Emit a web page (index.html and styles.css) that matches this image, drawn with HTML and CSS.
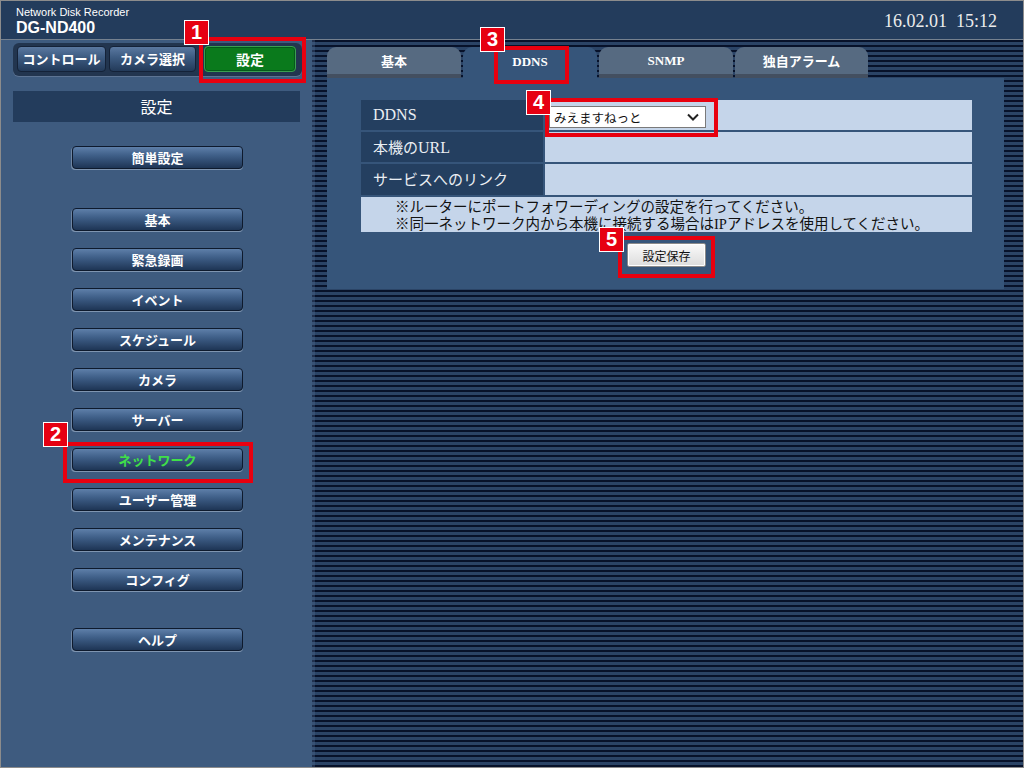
FILE: index.html
```html
<!DOCTYPE html>
<html lang="ja">
<head>
<meta charset="utf-8">
<title>DG-ND400 設定</title>
<link rel="stylesheet" href="styles.css">
</head>
<body>
<div class="app">
  <header class="topbar">
    <div class="brand">
      <div class="brand-sub">Network Disk Recorder</div>
      <div class="brand-model">DG-ND400</div>
    </div>
    <div class="clock">16.02.01&nbsp;&nbsp;15:12</div>
  </header>
  <div class="main">
    <aside class="sidebar">
      <div class="modes">
        <div class="mode">コントロール</div>
        <div class="mode">カメラ選択</div>
        <div class="mode mode-active">設定</div>
      </div>
      <div class="side-title">設定</div>
      <nav class="menu">
        <div class="menu-btn">簡単設定</div>
        <div class="menu-btn menu-sep">基本</div>
        <div class="menu-btn">緊急録画</div>
        <div class="menu-btn">イベント</div>
        <div class="menu-btn">スケジュール</div>
        <div class="menu-btn">カメラ</div>
        <div class="menu-btn">サーバー</div>
        <div class="menu-btn menu-current">ネットワーク</div>
        <div class="menu-btn">ユーザー管理</div>
        <div class="menu-btn">メンテナンス</div>
        <div class="menu-btn">コンフィグ</div>
        <div class="menu-btn menu-sep2">ヘルプ</div>
      </nav>
    </aside>
    <section class="content">
      <div class="tabs">
        <div class="tab">基本</div>
        <div class="tab tab-active latin">DDNS</div>
        <div class="tab latin">SNMP</div>
        <div class="tab">独自アラーム</div>
      </div>
      <div class="panel">
        <div class="form">
          <div class="label serif">DDNS</div>
          <div class="value">
            <div class="select">
              <span>みえますねっと</span>
              <svg class="chev" width="12" height="8" viewBox="0 0 12 8"><path d="M1 1.5 L6 6.5 L11 1.5" fill="none" stroke="#222" stroke-width="2"/></svg>
            </div>
          </div>
          <div class="label">本機の<span class="serif">URL</span></div>
          <div class="value"></div>
          <div class="label">サービスへのリンク</div>
          <div class="value"></div>
          <div class="notes">
            <div>※ルーターにポートフォワーディングの設定を行ってください。</div>
            <div>※同一ネットワーク内から本機に接続する場合は<span class="ip">IP</span>アドレスを使用してください。</div>
          </div>
        </div>
        <div class="actions">
          <button class="save" type="button">設定保存</button>
        </div>
      </div>
    </section>
  </div>

  <div class="hl hl-1"></div>
  <div class="tag tag-1">1</div>
  <div class="hl hl-2"></div>
  <div class="tag tag-2">2</div>
  <div class="hl hl-3"></div>
  <div class="tag tag-3">3</div>
  <div class="hl hl-4"></div>
  <div class="tag tag-4">4</div>
  <div class="hl hl-5"></div>
  <div class="tag tag-5">5</div>
</div>
</body>
</html>
```

FILE: styles.css
```css
* { box-sizing: border-box; }
html, body { margin: 0; padding: 0; }
body {
  width: 1024px;
  height: 768px;
  overflow: hidden;
  background: #ffffff;
  font-family: "Noto Sans CJK JP", "Liberation Sans", sans-serif;
}
.app {
  position: relative;
  width: 1024px;
  height: 768px;
  border: 1px solid #8c8c8c;
  display: flex;
  flex-direction: column;
  background: #3e5b7f;
  overflow: hidden;
}

/* ---------- top bar ---------- */
.topbar {
  height: 39px;
  flex: none;
  background: #233c5c;
  border-bottom: 1px solid #75818f;
  display: flex;
  justify-content: space-between;
  align-items: flex-start;
  color: #ffffff;
}
.brand { padding: 5px 0 0 15px; font-family: "Liberation Sans", Arial, sans-serif; }
.brand-sub { font-size: 11px; line-height: 12px; }
.brand-model { font-size: 16px; font-weight: bold; line-height: 17px; margin-top: 1px; }
.clock {
  font-family: "Liberation Serif", "Times New Roman", serif;
  font-size: 18px;
  color: #ececec;
  padding: 10px 26px 0 0;
  line-height: 20px;
}

/* ---------- layout ---------- */
.main { flex: 1; display: flex; min-height: 0; }
.sidebar {
  width: 311px;
  flex: none;
  background: #3e5b7f;
  padding: 3px 0 0 12px;
  display: flex;
  flex-direction: column;
}
.content {
  flex: 1;
  padding: 7px 0 0 15px;
  background: repeating-linear-gradient(to bottom, #07122a 0, #07122a 2px, #2b4466 2px, #2b4466 5px);
  box-shadow: inset 3px 0 0 rgba(80, 110, 150, 0.35);
}

/* ---------- mode buttons ---------- */
.modes {
  width: 289px;
  height: 33px;
  display: flex;
  gap: 3px;
  padding: 3px 5px 3px 4px;
  background: #22354f;
  border-radius: 6px;
  box-shadow: 0 1px 0 #5d7493;
}
.mode {
  height: 26px;
  flex: none;
  width: 89px;
  border-radius: 4px;
  background: linear-gradient(to bottom, #5a78a0 0%, #3c5a80 45%, #233a59 100%);
  border: 1px solid #142238;
  color: #ffffff;
  font-size: 13px;
  font-weight: bold;
  line-height: 24px;
  text-align: center;
}
.mode:nth-child(2) { width: 87px; }
.mode-active {
  margin-left: 5px;
  width: 92px;
  background: #0a7a1c;
  border: 1px solid #3aa050;
  box-shadow: inset 0 0 0 1px #06591a;
  font-size: 14px;
}

.side-title {
  margin-top: 15px;
  width: 287px;
  height: 31px;
  background: #233c5c;
  color: #ffffff;
  font-size: 16px;
  line-height: 31px;
  text-align: center;
}

/* ---------- side menu ---------- */
.menu {
  margin: 24px 0 0 59px;
  display: flex;
  flex-direction: column;
  gap: 17px;
}
.menu-btn {
  width: 171px;
  height: 23px;
  border: 1px solid #0e1a2d;
  border-radius: 4px;
  background: linear-gradient(to bottom, #5e7fa9 0%, #3f5f88 40%, #1e3555 100%);
  box-shadow: 0 1px 0 #7f95b0, -1px 1px 0 #6f86a4;
  color: #ffffff;
  font-size: 13px;
  font-weight: bold;
  line-height: 21px;
  text-align: center;
}
.menu-sep { margin-top: 22px; }
.menu-sep2 { margin-top: 20px; }
.menu-current { color: #3fe048; }

/* ---------- tabs ---------- */
.tabs { display: flex; gap: 2px; height: 31px; }
.tab {
  width: 134px;
  height: 31px;
  background: #566a81;
  border-bottom: 4px solid #434f60;
  border-radius: 9px 9px 0 0;
  color: #ffffff;
  font-size: 13px;
  font-weight: bold;
  line-height: 27px;
  text-align: center;
}
.tab:nth-child(4) { width: 133px; }
.latin { font-family: "Liberation Serif", "Noto Sans CJK JP", serif; font-size: 13px; }
.tab-active {
  background: #36557a;
  border-bottom: 4px solid #36557a;
  line-height: 29px;
}

/* ---------- panel ---------- */
.panel {
  width: 677px;
  height: 211px;
  background: #36557a;
  padding: 22px 32px 0 34px;
}
.form {
  display: grid;
  grid-template-columns: 182px 427px;
  grid-template-rows: 30px 30px 31px 35px;
  gap: 2px;
}
.label {
  background: #243f60;
  color: #eaeef3;
  font-size: 15px;
  line-height: 30px;
  padding-left: 12px;
}
.serif { font-family: "Liberation Serif", "Noto Sans CJK JP", serif; font-size: 16px; }
.value {
  background: #c5d5ea;
  padding: 6px 0 0 4px;
}
.select {
  width: 157px;
  height: 22px;
  background: #ffffff;
  border: 1px solid #7a7a7a;
  display: flex;
  align-items: center;
  justify-content: space-between;
  padding: 0 6px 0 4px;
  font-size: 12.5px;
  color: #111111;
}
.chev { display: block; }
.notes {
  grid-column: 1 / 3;
  background: #c5d5ea;
  color: #111111;
  font-size: 14.5px;
  line-height: 17px;
  padding: 0 0 0 34px;
}
.ip { font-family: "Liberation Serif", serif; }
.actions {
  width: 611px;
  display: flex;
  justify-content: center;
  padding-top: 11px;
}
.save {
  width: 79px;
  height: 24px;
  border: 1px solid #8a8a8a;
  border-radius: 2px;
  background: linear-gradient(to bottom, #fafafa 0%, #ebebeb 50%, #dcdcdc 100%);
  box-shadow: inset 0 0 0 1px #ffffff;
  font-family: "Noto Sans CJK JP", sans-serif;
  font-size: 12px;
  color: #111111;
  padding: 0;
}

/* ---------- annotations ---------- */
.hl {
  position: absolute;
  border: 4px solid #e8000f;
}
.hl-1 { left: 198px; top: 36px; width: 107px; height: 46px; }
.hl-2 { left: 62px; top: 441px; width: 190px; height: 41px; }
.hl-3 { left: 493px; top: 45px; width: 75px; height: 38px; }
.hl-4 { left: 544px; top: 97px; width: 173px; height: 39px; }
.hl-5 { left: 617px; top: 235px; width: 97px; height: 42px; }
.tag {
  position: absolute;
  width: 25px;
  height: 25px;
  background: #e60012;
  border: 1.5px solid #ffffff;
  color: #ffffff;
  font-family: "Liberation Sans", Arial, sans-serif;
  font-weight: bold;
  font-size: 20px;
  line-height: 22px;
  text-align: center;
}
.tag-1 { left: 183px; top: 19px; }
.tag-2 { left: 42px; top: 421px; }
.tag-3 { left: 479px; top: 26px; }
.tag-4 { left: 525px; top: 89px; }
.tag-5 { left: 598px; top: 226px; }
```
